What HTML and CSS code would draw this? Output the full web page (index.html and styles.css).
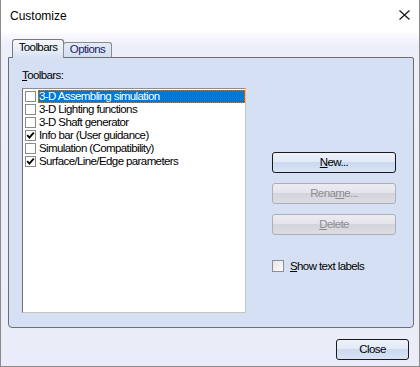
FILE: index.html
```html
<!DOCTYPE html>
<html lang="en">
<head>
    <meta charset="UTF-8">
    <title>Customize</title>
    <link rel="stylesheet" href="styles.css">
</head>
<body>
<div class="window">
    <div class="titlebar">
        <span class="title">Customize</span>
        <svg class="close-x" width="11" height="10" viewBox="0 0 11 10">
            <path d="M0.5 0.5 L10.5 9.5 M10.5 0.5 L0.5 9.5" stroke="#111" stroke-width="1.1" fill="none"/>
        </svg>
    </div>
    <div class="dialog-body">
        <div class="tabs">
            <div class="tab active">Toolbars</div>
            <div class="tab">Options</div>
        </div>
        <div class="tab-page">
            <div class="list-col">
                <div class="field-label"><u>T</u>oolbars:</div>
                <ul class="toolbar-list">
                    <li class="selected"><span class="check"></span><span class="item-text">3-D Assembling simulation</span></li>
                    <li><span class="check"></span><span class="item-text">3-D Lighting functions</span></li>
                    <li><span class="check"></span><span class="item-text">3-D Shaft generator</span></li>
                    <li><span class="check checked"><svg width="9" height="9" viewBox="0 0 9 9"><path d="M1.2 4.2 L3.4 6.6 L7.8 1.6" stroke="#000" stroke-width="1.8" fill="none"/></svg></span><span class="item-text">Info bar (User guidance)</span></li>
                    <li><span class="check"></span><span class="item-text">Simulation (Compatibility)</span></li>
                    <li><span class="check checked"><svg width="9" height="9" viewBox="0 0 9 9"><path d="M1.2 4.2 L3.4 6.6 L7.8 1.6" stroke="#000" stroke-width="1.8" fill="none"/></svg></span><span class="item-text">Surface/Line/Edge parameters</span></li>
                </ul>
            </div>
            <div class="action-col">
                <button class="btn default"><u>N</u>ew...</button>
                <button class="btn" disabled>Rena<u>m</u>e...</button>
                <button class="btn" disabled><u>D</u>elete</button>
                <div class="show-labels"><span class="check-box"></span><span><u>S</u>how text labels</span></div>
            </div>
        </div>
        <div class="footer">
            <button class="btn default close-btn">Close</button>
        </div>
    </div>
</div>
</body>
</html>
```

FILE: styles.css
```css
body {
    margin: 0;
    background: #fff;
    font-family: "Liberation Sans", Arial, sans-serif;
    font-size: 11.5px;
    letter-spacing: -0.6px;
    color: #000;
}

.window {
    width: 420px;
    height: 367px;
    box-sizing: border-box;
    border: 1px solid #8a8a8a;
    border-top: none;
    display: flex;
    flex-direction: column;
    background: #fff;
}

.titlebar {
    height: 33px;
    flex-shrink: 0;
    display: flex;
    justify-content: space-between;
    align-items: flex-start;
    padding: 9px 9px 0 9px;
    box-sizing: border-box;
}

.title {
    font-size: 12px;
    line-height: 14px;
    letter-spacing: 0;
}

.close-x {
    margin-top: 1px;
}

.dialog-body {
    flex: 1;
    display: flex;
    flex-direction: column;
    padding: 6px 6px 0 7px;
    background: linear-gradient(#fbfbff 0, #edeffa 12px, #eaedf9 100%);
}

/* tab strip */
.tabs {
    display: flex;
    align-items: flex-end;
    height: 18px;
    padding-left: 4px;
    position: relative;
    z-index: 1;
}

.tab {
    box-sizing: border-box;
    height: 15px;
    width: 49px;
    border: 1px solid #8c8c8c;
    border-bottom: none;
    border-radius: 3px 3px 0 0;
    margin-left: -1px;
    text-align: center;
    line-height: 13px;
    color: #1b1b5e;
    background: linear-gradient(#e4ebf7, #d3dff2);
}

.tab.active {
    height: 19px;
    width: 52px;
    margin-left: 0;
    margin-bottom: -1px;
    padding-top: 1px;
    color: #000;
    background: linear-gradient(#f8f9fd, #e6ecf8 60%, #d6e0f4);
    border-color: #7a7a7a;
}

.tab-page {
    box-sizing: border-box;
    height: 271px;
    flex-shrink: 0;
    width: 406px;
    border: 1px solid #6e6e6e;
    border-radius: 0 2px 4px 4px;
    background: #d6e0f4;
    display: flex;
    padding: 11px 16px 0 13px;
}

.field-label {
    line-height: 13px;
    margin-bottom: 6px;
}

.toolbar-list {
    list-style: none;
    margin: 0;
    box-sizing: border-box;
    width: 224px;
    height: 225px;
    padding: 1px 0 0 2px;
    background: #fff;
    border: 1px solid #c6c6c6;
    border-top-color: #8e8e8e;
    border-left-color: #6f6f6f;
}

.toolbar-list li {
    display: flex;
    align-items: center;
    height: 13px;
}

.check {
    box-sizing: border-box;
    width: 11px;
    height: 11px;
    border: 1px solid #8a8a8a;
    background: #fff;
    margin-right: 2px;
    display: flex;
    align-items: center;
    justify-content: center;
    flex-shrink: 0;
}

.item-text {
    flex: 1;
    height: 13px;
    box-sizing: border-box;
    line-height: 11px;
    padding-left: 0;
    border: 1px solid transparent;
    white-space: nowrap;
}

.selected .item-text {
    background: #0078d7;
    color: #fff;
    border: 1px dotted #e2760c;
}

.action-col {
    margin-left: 26px;
    padding-top: 83px;
    display: flex;
    flex-direction: column;
}

.btn {
    box-sizing: border-box;
    width: 124px;
    height: 21px;
    margin: 0 0 10px 0;
    padding: 0 0 1px 0;
    font: inherit;
    letter-spacing: inherit;
    line-height: 18px;
    color: #000;
    border: 1px solid #acb0b6;
    border-radius: 3px;
    background: linear-gradient(#ececf0, #e4e4ea 45%, #d4d4dc 50%, #dcdce4);
}

.btn:disabled {
    color: #8d8d8d;
}

.btn.default {
    border-color: #1a1a1a;
    background: linear-gradient(#edf2fb, #e3eaf7 45%, #ccd9f0 50%, #d7e2f4);
}

.show-labels {
    display: flex;
    align-items: center;
    height: 13px;
    margin-top: 14px;
}

.check-box {
    box-sizing: border-box;
    width: 12px;
    height: 12px;
    border: 1px solid #8e8e8e;
    background: linear-gradient(135deg, #e6e6e9, #fbfbfd);
    margin-right: 6px;
}

.footer {
    display: flex;
    justify-content: flex-end;
    padding: 11px 4px 0 0;
}

.close-btn {
    width: 73px;
    margin: 0;
}
```
